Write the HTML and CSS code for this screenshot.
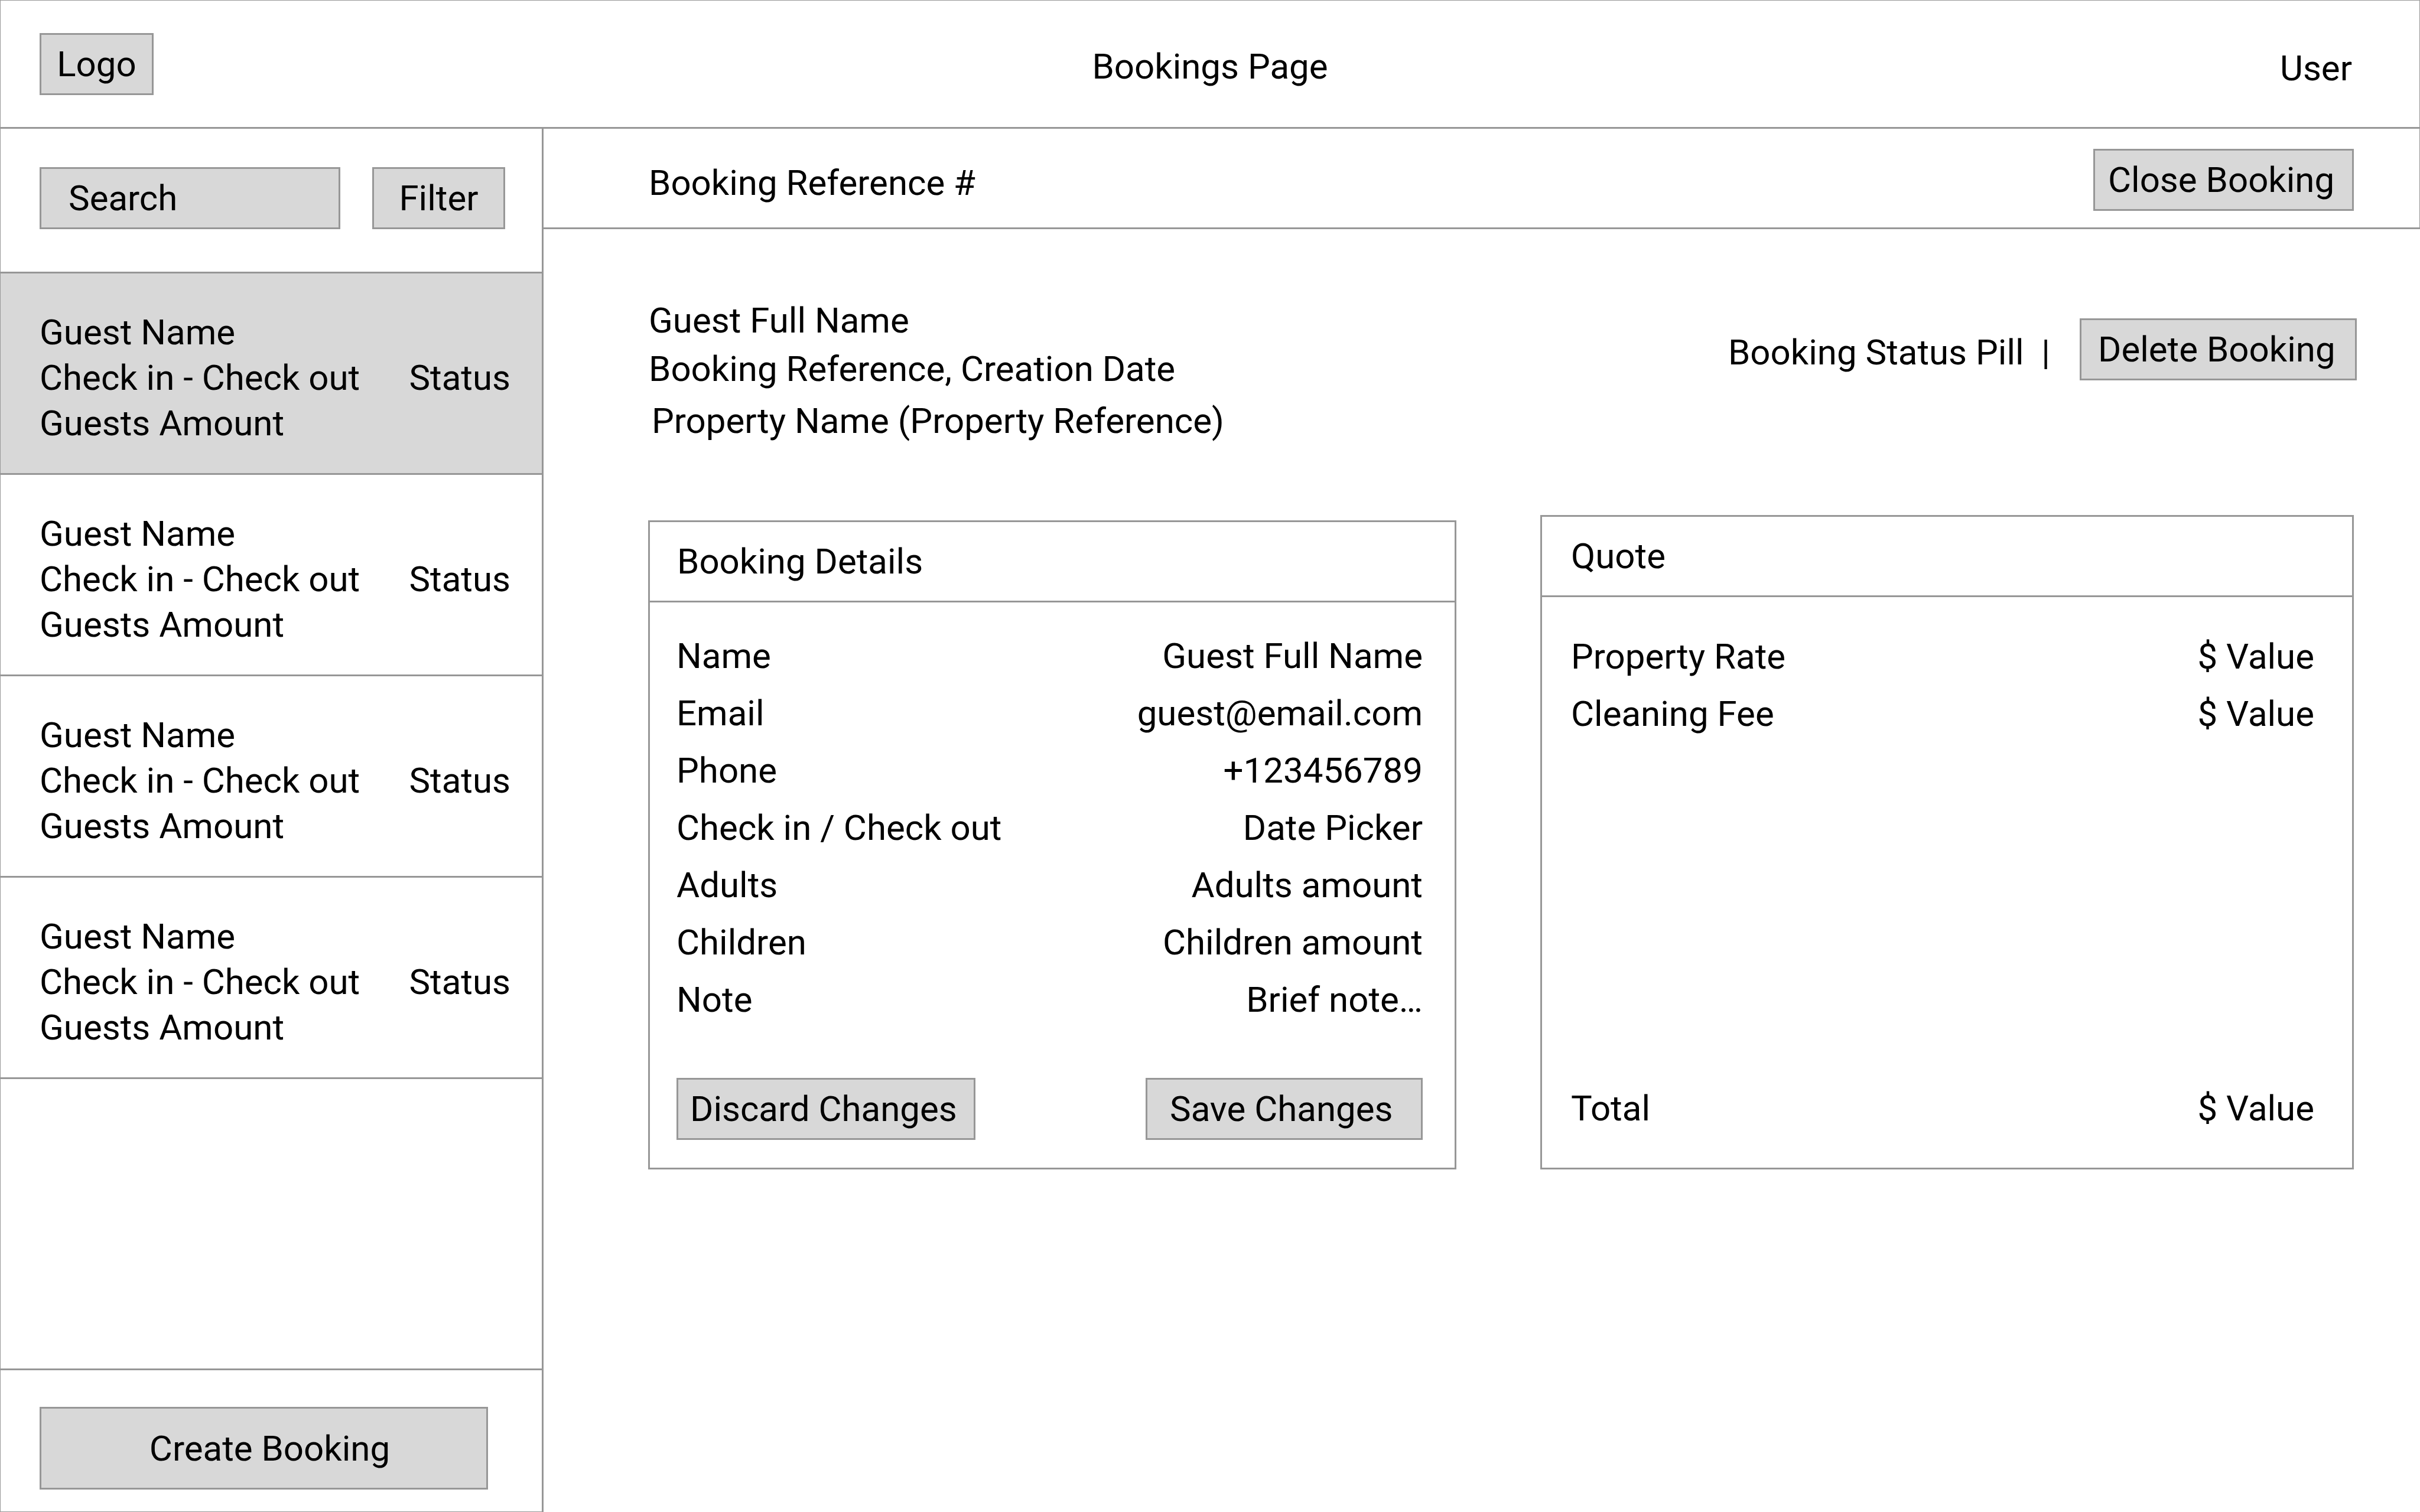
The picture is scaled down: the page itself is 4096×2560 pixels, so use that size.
FILE: index.html
```html
<!DOCTYPE html>
<html lang="en">
<head>
<meta charset="utf-8">
<title>Bookings Page</title>
<link rel="stylesheet" href="styles.css">
</head>
<body class="page">
  <header class="topbar">
    <a class="box logo" href="#">Logo</a>
    <h1 class="topbar-title">Bookings Page</h1>
    <a class="user" href="#">User</a>
  </header>

  <div class="layout">
    <aside class="sidebar">
      <form class="search-row">
        <input class="box search" type="text" placeholder="Search" aria-label="Search">
        <button class="box filter" type="button">Filter</button>
      </form>
      <ul class="bookings">
        <li><a class="booking booking-active" href="#">
          <span class="booking-info"><span>Guest Name</span><span>Check in - Check out</span><span>Guests Amount</span></span>
          <span>Status</span>
        </a></li>
        <li><a class="booking" href="#">
          <span class="booking-info"><span>Guest Name</span><span>Check in - Check out</span><span>Guests Amount</span></span>
          <span>Status</span>
        </a></li>
        <li><a class="booking" href="#">
          <span class="booking-info"><span>Guest Name</span><span>Check in - Check out</span><span>Guests Amount</span></span>
          <span>Status</span>
        </a></li>
        <li><a class="booking" href="#">
          <span class="booking-info"><span>Guest Name</span><span>Check in - Check out</span><span>Guests Amount</span></span>
          <span>Status</span>
        </a></li>
      </ul>
      <div class="sidebar-foot">
        <button class="box create" type="button">Create Booking</button>
      </div>
    </aside>

    <main class="main">
      <div class="subbar">
        <h2 class="subbar-title">Booking Reference #</h2>
        <button class="box close" type="button">Close Booking</button>
      </div>

      <section class="summary">
        <div class="summary-info">
          <p>Guest Full Name</p>
          <p>Booking Reference, Creation Date</p>
          <p class="property">Property Name (Property Reference)</p>
        </div>
        <div class="summary-actions">
          <span class="status">Booking Status Pill  |</span>
          <button class="box delete" type="button">Delete Booking</button>
        </div>
      </section>

      <div class="cards">
        <form class="card">
          <h3 class="card-title details-title">Booking Details</h3>
          <div class="details">
            <div class="field"><label for="name">Name</label><input id="name" type="text" value="Guest Full Name"></div>
            <div class="field"><label for="email">Email</label><input id="email" type="text" value="guest@email.com"></div>
            <div class="field"><label for="phone">Phone</label><input id="phone" type="text" value="+123456789"></div>
            <div class="field"><label for="dates">Check in / Check out</label><input id="dates" type="text" value="Date Picker"></div>
            <div class="field"><label for="adults">Adults</label><input id="adults" type="text" value="Adults amount"></div>
            <div class="field"><label for="children">Children</label><input id="children" type="text" value="Children amount"></div>
            <div class="field"><label for="note">Note</label><input id="note" type="text" value="Brief note…"></div>
            <div class="details-actions">
              <button class="box discard" type="button">Discard Changes</button>
              <button class="box save" type="button">Save Changes</button>
            </div>
          </div>
        </form>

        <section class="card">
          <h3 class="card-title quote-title">Quote</h3>
          <table class="quote">
            <tbody>
              <tr><th scope="row">Property Rate</th><td>$ Value</td></tr>
              <tr><th scope="row">Cleaning Fee</th><td>$ Value</td></tr>
            </tbody>
            <tfoot>
              <tr><th scope="row">Total</th><td>$ Value</td></tr>
            </tfoot>
          </table>
        </section>
      </div>
    </main>
  </div>
</body>
</html>
```

FILE: styles.css
```css
:root {
  --line: #979797;
  --fill: #d8d8d8;
}

* {
  box-sizing: border-box;
  margin: 0;
  padding: 0;
}

.page {
  display: flex;
  flex-direction: column;
  min-height: 100vh;
  background: #fff;
  color: #000;
  font: 400 60px/82px Roboto, "Liberation Sans", sans-serif;
}

h1, h2, h3, th, button, input {
  font: inherit;
  color: inherit;
}

a {
  color: inherit;
  text-decoration: none;
}

/* Grey outlined box shared by the logo, buttons and search field */
.box {
  height: 105px;
  border: 3px solid var(--line);
  border-radius: 0;
  background: var(--fill);
  line-height: 99px;
  text-align: center;
  white-space: nowrap;
}

/* Top bar */
.topbar {
  display: grid;
  grid-template-columns: 1fr auto 1fr;
  align-items: center;
  min-height: 218px;
  padding: 0 66px;
  border: 1px solid var(--line);
  border-bottom-width: 3px;
}

.logo {
  width: 193px;
}

.topbar-title {
  padding-top: 10px;
}

.user {
  justify-self: end;
  padding: 16px 48px 0 0;
}

.layout {
  display: flex;
  flex: 1;
}

/* Sidebar */
.sidebar {
  display: flex;
  flex-direction: column;
  flex: none;
  width: 920px;
  border: solid var(--line);
  border-width: 0 3px 1px 1px;
}

.search-row {
  display: flex;
  gap: 54px;
  padding: 65px 62px 72px 66px;
}

.search {
  flex: 1;
  min-width: 0;
  padding-left: 46px;
  text-align: left;
}

.search::placeholder {
  color: inherit;
  opacity: 1;
}

.filter {
  width: 225px;
}

.bookings {
  border-top: 3px solid var(--line);
  list-style: none;
}

.booking {
  display: flex;
  align-items: center;
  justify-content: space-between;
  padding: 61px 53px 46px 66px;
  border-bottom: 3px solid var(--line);
  line-height: 77px;
}

.booking-active {
  background: var(--fill);
}

.booking-info {
  display: flex;
  flex-direction: column;
}

.sidebar-foot {
  margin-top: auto;
  padding: 62px 91px 37px 66px;
  border-top: 3px solid var(--line);
}

.create {
  width: 100%;
  height: 140px;
  padding-left: 20px;
}

/* Main column */
.main {
  flex: 1;
  min-width: 0;
}

.subbar {
  display: flex;
  align-items: center;
  justify-content: space-between;
  padding: 34px 111px 28px 178px;
  border: solid var(--line);
  border-width: 0 1px 3px 0;
}

.subbar-title {
  padding-top: 10px;
}

.close {
  width: 441px;
  padding-left: 22px;
  text-align: left;
}

.summary {
  display: flex;
  align-items: flex-start;
  justify-content: space-between;
  padding: 114px 107px 118px 178px;
}

.property {
  padding: 6px 0 0 5px;
}

.summary-actions {
  display: flex;
  align-items: center;
  gap: 50px;
  padding-top: 37px;
}

.status {
  padding-top: 10px;
  white-space: pre;
}

.delete {
  width: 469px;
  padding-left: 28px;
  text-align: left;
}

/* Cards */
.cards {
  display: grid;
  grid-template-columns: 1368fr 1377fr;
  align-items: end;
  gap: 142px;
  padding: 0 112px 0 177px;
}

.card {
  display: flex;
  flex-direction: column;
  border: 3px solid var(--line);
}

.card:last-child {
  align-self: stretch;
}

.card:first-child {
  margin-top: 9px;
}

.card-title {
  border-bottom: 3px solid var(--line);
  line-height: 133px;
}

.details-title {
  padding-left: 46px;
}

.quote-title {
  padding-left: 49px;
}

.details {
  padding: 42px 54px 47px 45px;
}

.field {
  display: flex;
  justify-content: space-between;
  line-height: 97px;
}

.field input {
  flex: 1;
  min-width: 0;
  height: 97px;
  border: 0;
  background: none;
  text-align: right;
}

.details-actions {
  display: flex;
  justify-content: space-between;
  padding-top: 84px;
}

.discard {
  width: 506px;
  padding-left: 20px;
  text-align: left;
}

.save {
  width: 469px;
  padding-left: 38px;
  text-align: left;
}

.quote {
  display: flex;
  flex: 1;
  flex-direction: column;
  justify-content: space-between;
  padding: 52px 64px 52px 49px;
  line-height: 97px;
}

.quote tbody,
.quote tfoot {
  display: block;
}

.quote tr {
  display: flex;
  justify-content: space-between;
}
```
